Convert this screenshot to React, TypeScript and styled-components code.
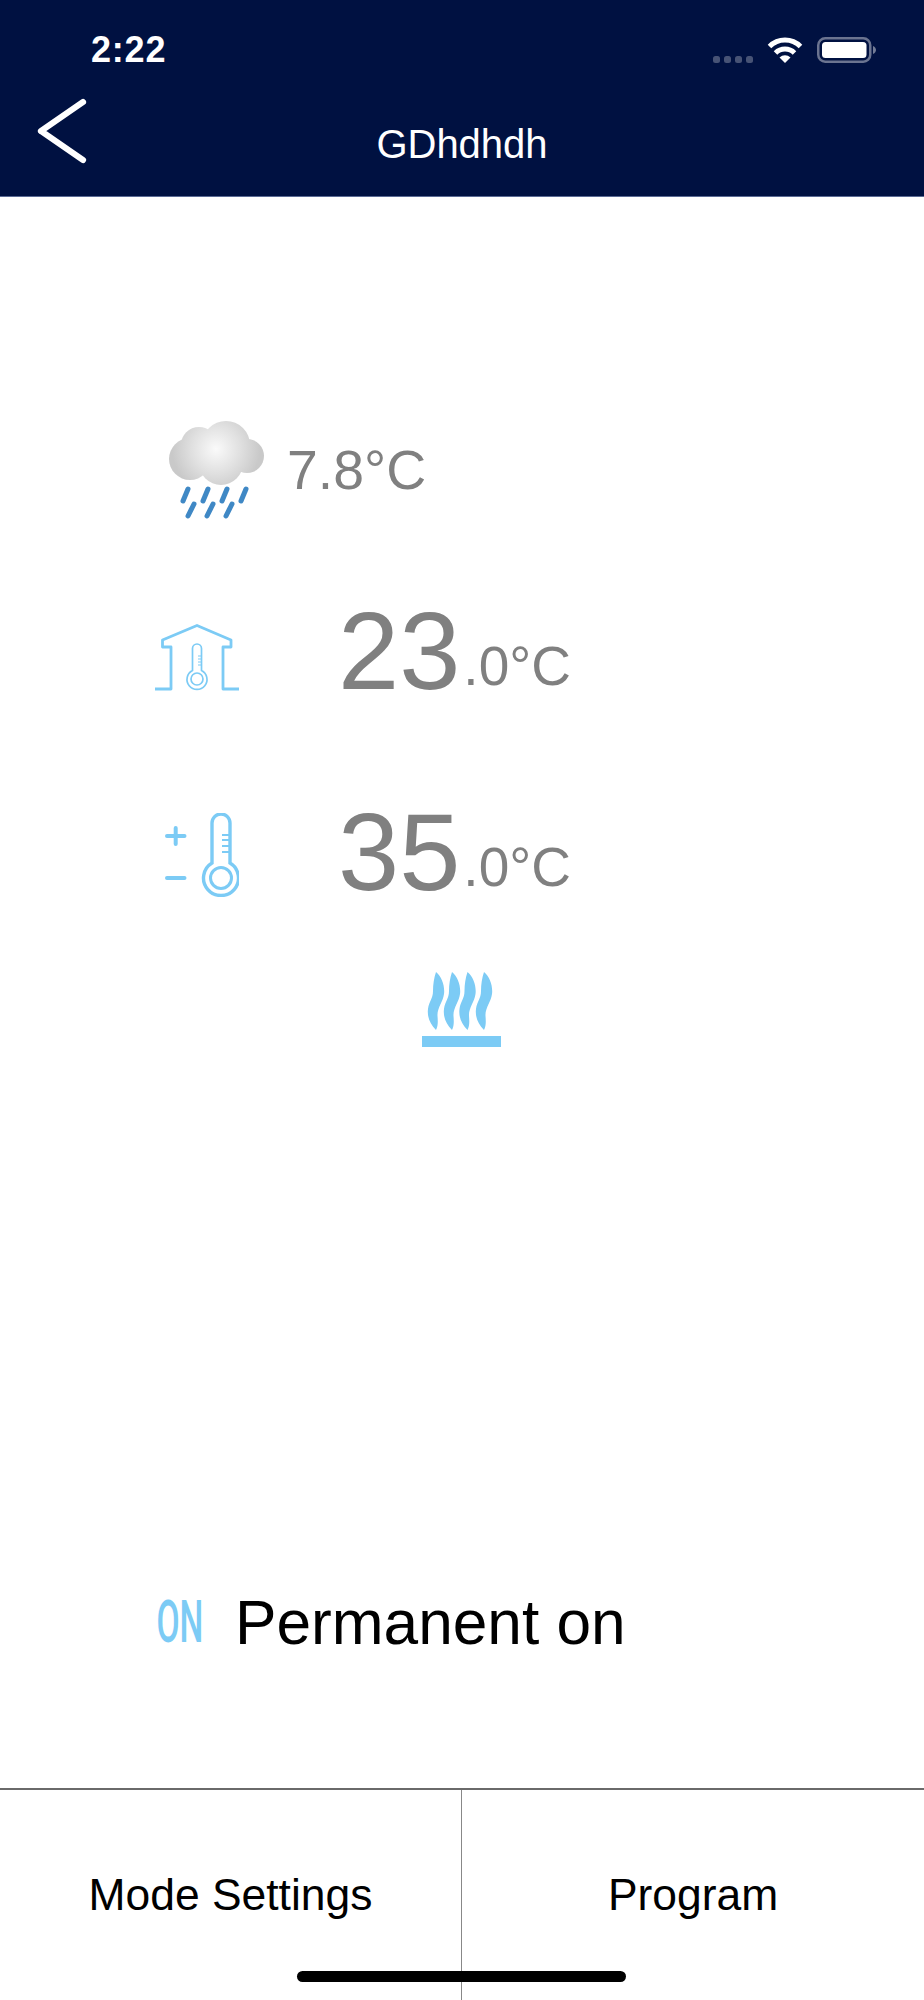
import styled, { createGlobalStyle } from "styled-components";

const GlobalStyle = createGlobalStyle`
    html, body {
        margin: 0;
        padding: 0;
        background: #fff;
        font-family: "Liberation Sans", Arial, sans-serif;
    }
`;

const BLUE = "#7ccbf5";

const BackIcon = () => (
    <svg width="52" height="68" viewBox="0 0 52 68" fill="none">
        <path d="M47 5 L5 34 M5 34 L47 63" stroke="#fff" strokeWidth="6.2" strokeLinecap="round" />
    </svg>
);

const WifiIcon = () => (
    <svg width="36" height="26" viewBox="0 0 36 26" fill="none">
        <path d="M2.5 9.5 A22 22 0 0 1 33.5 9.5" stroke="#fff" strokeWidth="5" />
        <path d="M8.5 16 A13.5 13.5 0 0 1 27.5 16" stroke="#fff" strokeWidth="5" />
        <path d="M18 26 L12.5 20.5 A8 8 0 0 1 23.5 20.5 Z" fill="#fff" />
    </svg>
);

const BatteryIcon = () => (
    <svg width="59" height="26" viewBox="0 0 59 26" fill="none">
        <rect x="1.25" y="1.25" width="52" height="23.5" rx="7" stroke="#fff" strokeOpacity=".42" strokeWidth="2.5" />
        <rect x="5" y="5" width="44.5" height="16" rx="3.5" fill="#fff" />
        <path d="M56 9 C58 10 59 11.5 59 13 C59 14.5 58 16 56 17 Z" fill="#fff" fillOpacity=".45" />
    </svg>
);

const CloudIcon = () => (
    <svg width="96" height="98" viewBox="0 0 96 98" fill="none">
        <defs>
            <radialGradient id="cloudShade" gradientUnits="userSpaceOnUse" cx="47" cy="28" r="44">
                <stop offset="0" stopColor="#fafafa" />
                <stop offset=".55" stopColor="#e0e0e0" />
                <stop offset="1" stopColor="#c9c9c9" />
            </radialGradient>
        </defs>
        <g fill="url(#cloudShade)">
            <circle cx="21" cy="38" r="21" />
            <circle cx="30" cy="24" r="18" />
            <circle cx="57" cy="24" r="24" />
            <circle cx="78" cy="35" r="17" />
            <circle cx="52" cy="42" r="22" />
            <rect x="25" y="20" width="50" height="28" />
        </g>
        <g stroke="#3f88c5" strokeWidth="5" strokeLinecap="round">
            <path d="M19 68 L14 80" />
            <path d="M39 68 L34 80" />
            <path d="M58 68 L53 80" />
            <path d="M77 68 L72 80" />
            <path d="M25 83 L19 95" />
            <path d="M44 83 L38 95" />
            <path d="M63 83 L57 95" />
        </g>
    </svg>
);

const HouseIcon = () => (
    <svg width="84" height="67" viewBox="0 0 84 67" fill="none" stroke={BLUE}>
        <path
            d="M0 65 H16 V23 H7.5 V16 L42 1.5 L76 16 V23 H68 V65 H84"
            strokeWidth="2.8"
            strokeLinejoin="round"
        />
        <path
            d="M37.5 46.5 V24.5 A4.5 4.5 0 0 1 46.5 24.5 V46.5 A10 10 0 1 1 37.5 46.5 Z"
            strokeWidth="1.7"
        />
        <circle cx="42" cy="55" r="6" strokeWidth="1.7" />
        <path d="M43 32 H47 M43 35 H47 M43 38 H47 M43 41 H47" strokeWidth="1.2" />
    </svg>
);

const SetpointIcon = () => (
    <svg width="74" height="84" viewBox="0 0 74 84" fill="none" stroke={BLUE}>
        <path d="M2 23 H19.5 M10.7 15 V31 M2 65 H19.5" strokeWidth="4" strokeLinecap="round" />
        <path d="M47 50 V10 A9 9 0 0 1 65 10 V50 A17.5 17.5 0 1 1 47 50 Z" strokeWidth="3.4" />
        <circle cx="56" cy="65" r="10.5" strokeWidth="3" />
        <path d="M57 22 H65 M57 27 H65 M57 33 H65 M57 39 H65" strokeWidth="2" />
    </svg>
);

const WAVE = "M14 0 C20 5 23 14 22 22 C21 30 15 36 15.5 44 C16 50 16 54 14 58 C8 52 5 45 6 37 C7 29 11 27 11 19 C11 12 12 6 14 0 Z";

const HeatIcon = () => (
    <svg width="80" height="75" viewBox="0 0 80 75" fill={BLUE}>
        {[0, 16, 31.5, 48].map(offset => (
            <path key={offset} d={WAVE} transform={`translate(${offset} 0)`} />
        ))}
        <rect x="0" y="64" width="79" height="11" />
    </svg>
);

export default function App() {
    return (
        <>
            <GlobalStyle />
            <Screen>
                <Header>
                    <StatusBar>
                        <Clock>2:22</Clock>
                        <StatusIcons>
                            <SignalDots>
                                <SignalDot />
                                <SignalDot />
                                <SignalDot />
                                <SignalDot />
                            </SignalDots>
                            <WifiIcon />
                            <BatteryIcon />
                        </StatusIcons>
                    </StatusBar>
                    <NavBar>
                        <BackButton type="button" aria-label="Back">
                            <BackIcon />
                        </BackButton>
                        <Title>GDhdhdh</Title>
                    </NavBar>
                </Header>

                <Main>
                    <WeatherRow>
                        <CloudIcon />
                        <WeatherValue>7.8°C</WeatherValue>
                    </WeatherRow>
                    <ReadingRow $top={72}>
                        <ReadingIcon $shift={10}><HouseIcon /></ReadingIcon>
                        <Reading>23<ReadingUnit>.0°C</ReadingUnit></Reading>
                    </ReadingRow>
                    <ReadingRow $top={81}>
                        <ReadingIcon $shift={4}><SetpointIcon /></ReadingIcon>
                        <Reading>35<ReadingUnit>.0°C</ReadingUnit></Reading>
                    </ReadingRow>
                    <HeatStatus><HeatIcon /></HeatStatus>
                    <ModeRow>
                        <OnBadge><OnText>ON</OnText></OnBadge>
                        <ModeLabel>Permanent on</ModeLabel>
                    </ModeRow>
                </Main>

                <Footer>
                    <FooterButton type="button">Mode Settings</FooterButton>
                    <FooterButton type="button">Program</FooterButton>
                    <HomeIndicator />
                </Footer>
            </Screen>
        </>
    );
}

const Screen = styled.div`
    width: 924px;
    height: 2000px;
    display: flex;
    flex-direction: column;
    overflow: hidden;
    background: #fff;
`;

const Header = styled.header`
    height: 197px;
    box-sizing: border-box;
    background: #001141;
    border-bottom: 1px solid #5a6a94;
`;

const StatusBar = styled.div`
    height: 76px;
    padding: 24px 48px 0 91px;
    box-sizing: border-box;
    display: flex;
    align-items: center;
    justify-content: space-between;
`;

const Clock = styled.span`
    font-size: 36px;
    font-weight: 700;
    letter-spacing: 0.8px;
    color: #fff;
`;

const StatusIcons = styled.div`
    display: flex;
    align-items: flex-end;
    gap: 14px;
`;

const SignalDots = styled.div`
    display: flex;
    gap: 4px;
`;

const SignalDot = styled.span`
    width: 7px;
    height: 7px;
    border-radius: 2.5px;
    background: rgba(255, 255, 255, 0.28);
`;

const NavBar = styled.div`
    height: 120px;
    display: grid;
    grid-template-columns: 1fr auto 1fr;
`;

const BackButton = styled.button`
    width: 60px;
    height: 68px;
    margin: 21px 0 0 36px;
    padding: 0;
    border: 0;
    background: none;
    line-height: 0;
    text-align: left;
`;

const Title = styled.h1`
    grid-column: 2;
    margin: 45px 0 0;
    font-size: 40px;
    font-weight: 400;
    line-height: 46px;
    color: #fff;
`;

const Main = styled.main`
    flex: 1;
    display: flex;
    flex-direction: column;
    padding-top: 223px;
`;

const WeatherRow = styled.div`
    height: 100px;
    padding-left: 169px;
    display: flex;
    align-items: center;
    gap: 22px;
`;

const WeatherValue = styled.span`
    font-size: 55.4px;
    color: #808080;
`;

const ReadingRow = styled.div<{ $top: number }>`
    height: 120px;
    margin-top: ${({ $top }) => $top}px;
    padding-left: 155px;
    display: flex;
    align-items: center;
    gap: 99px;
`;

const ReadingIcon = styled.div<{ $shift: number }>`
    width: 84px;
    margin-top: ${({ $shift }) => $shift}px;
    display: flex;
    justify-content: flex-end;
`;

const Reading = styled.span`
    margin-top: 12px;
    font-size: 110px;
    line-height: 120px;
    color: #808080;
`;

const ReadingUnit = styled.span`
    font-size: 55px;
    margin-left: 3px;
    vertical-align: 4px;
`;

const HeatStatus = styled.div`
    margin-top: 59px;
    display: flex;
    justify-content: center;
`;

const ModeRow = styled.div`
    margin-top: auto;
    margin-bottom: 136px;
    height: 60px;
    padding-left: 158px;
    display: flex;
    align-items: center;
    gap: 33px;
`;

const OnBadge = styled.span`
    width: 44px;
    height: 60px;
    display: flex;
    align-items: center;
    justify-content: center;
`;

const OnText = styled.span`
    display: inline-block;
    font-family: Roboto, "Liberation Sans", sans-serif;
    font-size: 60px;
    font-weight: 500;
    line-height: 60px;
    color: ${BLUE};
    transform: scaleX(0.56);
`;

const ModeLabel = styled.span`
    font-size: 62.2px;
    color: #000;
`;

const Footer = styled.footer`
    position: relative;
    height: 210px;
    display: grid;
    grid-template-columns: 461px 1fr;
    border-top: 2px solid #6a6a6a;
`;

const FooterButton = styled.button`
    padding: 0;
    border: 0;
    background: none;
    font-family: inherit;
    font-size: 44.4px;
    color: #000;

    & + & {
        border-left: 1px solid #888;
    }
`;

const HomeIndicator = styled.div`
    position: absolute;
    left: 297px;
    bottom: 18px;
    width: 329px;
    height: 11px;
    border-radius: 6px;
    background: #000;
`;
